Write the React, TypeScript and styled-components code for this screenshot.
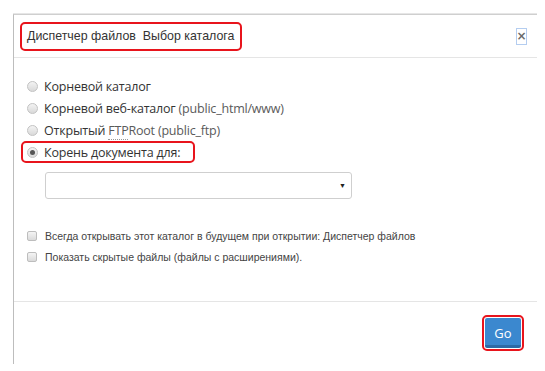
import styled, { createGlobalStyle } from 'styled-components'

const GlobalStyle = createGlobalStyle`
  html, body {
    margin: 0;
    padding: 0;
    background: #fff;
  }
  body {
    font-family: "Liberation Sans", Arial, sans-serif;
    color: #333;
  }
`

const Page = styled.div`
  padding: 14px 0 0 13px;
  width: 545px;
  height: 371px;
  box-sizing: border-box;
  overflow: hidden;
`

const Dialog = styled.div`
  width: 524px;
  height: 350px;
  box-sizing: border-box;
  border-top: 1px solid #cfcfcf;
  border-left: 1px solid #bdbdbd;
  box-shadow: 0 -1px 0 #e6e6e6;
  display: flex;
  flex-direction: column;
  background: #fff;
`

const Header = styled.div`
  height: 42px;
  border-bottom: 1px solid #e5e5e5;
  display: flex;
  align-items: center;
  justify-content: space-between;
  padding: 0 10px 0 6px;
`

const Title = styled.div`
  border: 2px solid #e8141c;
  border-radius: 5px;
  padding: 4px 6px 5px 5px;
  font-size: 12.4px;
  line-height: 16px;
  color: #333;
  white-space: pre;
`

const Close = styled.button`
  width: 11px;
  height: 17px;
  padding: 0;
  border: 1px solid #b4cdf0;
  background: #fff;
  color: #6a6a6a;
  font-family: "DejaVu Sans", sans-serif;
  font-size: 12px;
  font-weight: bold;
  line-height: 15px;
  display: flex;
  align-items: center;
  justify-content: center;
  margin-top: 1px;
`

const Body = styled.div`
  flex: 1;
  padding: 17px 0 0 7px;
  display: flex;
  flex-direction: column;
  align-items: flex-start;
`

const Row = styled.label<{ $marked?: boolean }>`
  display: inline-flex;
  align-items: center;
  gap: 6px;
  height: 18px;
  padding: 0 13px 0 4px;
  border: 2px solid ${p => (p.$marked ? '#e8141c' : 'transparent')};
  border-radius: 5px;
  font-family: "Open Sans", sans-serif;
  font-size: 12.5px;
  color: #333;
  white-space: nowrap;
  letter-spacing: -0.2px;
`

const Radio = styled.span<{ $checked?: boolean }>`
  width: 11px;
  height: 11px;
  box-sizing: border-box;
  border-radius: 50%;
  border: 1px solid #c2c2c2;
  background: linear-gradient(#f3f3f3, #d9d9d9);
  display: flex;
  align-items: center;
  justify-content: center;
  &::after {
    content: '';
    width: 5px;
    height: 5px;
    border-radius: 50%;
    background: ${p => (p.$checked ? '#555' : 'transparent')};
  }
`

const Muted = styled.span`
  color: #5a5a5a;
`

const Abbr = styled.abbr`
  text-decoration: none;
  border-bottom: 1px dotted #999;
  color: #5a5a5a;
`

const Select = styled.div`
  margin: 9px 0 0 24px;
  width: 307px;
  height: 27px;
  box-sizing: border-box;
  border: 1px solid #cfcfcf;
  border-radius: 3px;
  display: flex;
  align-items: center;
  justify-content: flex-end;
  padding-right: 5px;
  font-size: 7px;
  color: #222;
`

const Checks = styled.div`
  margin-top: 29px;
  display: flex;
  flex-direction: column;
  gap: 6px;
`

const CheckRow = styled.label`
  display: flex;
  align-items: center;
  gap: 8px;
  padding-left: 6px;
  height: 15px;
  font-size: 10.5px;
  color: #444;
  white-space: nowrap;
`

const Box = styled.span`
  width: 10px;
  height: 10px;
  box-sizing: border-box;
  border: 1px solid #bdbdbd;
  border-radius: 2px;
  background: linear-gradient(#f4f4f4, #dadada);
`

const Footer = styled.div`
  height: 62px;
  border-top: 1px solid #e5e5e5;
  display: flex;
  align-items: center;
  justify-content: flex-end;
  padding-right: 16px;
`

const GoButton = styled.button`
  width: 36px;
  height: 30px;
  box-sizing: border-box;
  background: #3b88cf;
  border: none;
  border-bottom: 3px solid #2c6aa6;
  border-radius: 2px;
  outline: 2px solid #e8141c;
  outline-offset: 1px;
  color: #fff;
  font-family: "Open Sans", sans-serif;
  font-size: 13px;
  padding: 2px 0 0;
`

export default function App() {
  return (
    <Page>
      <GlobalStyle />
      <Dialog>
        <Header>
          <Title>{'Диспетчер файлов  Выбор каталога'}</Title>
          <Close>×</Close>
        </Header>
        <Body>
          <Row>
            <Radio />
            Корневой каталог
          </Row>
          <Row>
            <Radio />
            <span>
              Корневой веб-каталог <Muted>(public_html/www)</Muted>
            </span>
          </Row>
          <Row>
            <Radio />
            <span>
              Открытый <Abbr>FTP</Abbr>
              <Muted>Root (public_ftp)</Muted>
            </span>
          </Row>
          <Row $marked>
            <Radio $checked />
            Корень документа для:
          </Row>
          <Select>▼</Select>
          <Checks>
            <CheckRow>
              <Box />
              Всегда открывать этот каталог в будущем при открытии: Диспетчер файлов
            </CheckRow>
            <CheckRow>
              <Box />
              Показать скрытые файлы (файлы с расширениями).
            </CheckRow>
          </Checks>
        </Body>
        <Footer>
          <GoButton>Go</GoButton>
        </Footer>
      </Dialog>
    </Page>
  )
}
